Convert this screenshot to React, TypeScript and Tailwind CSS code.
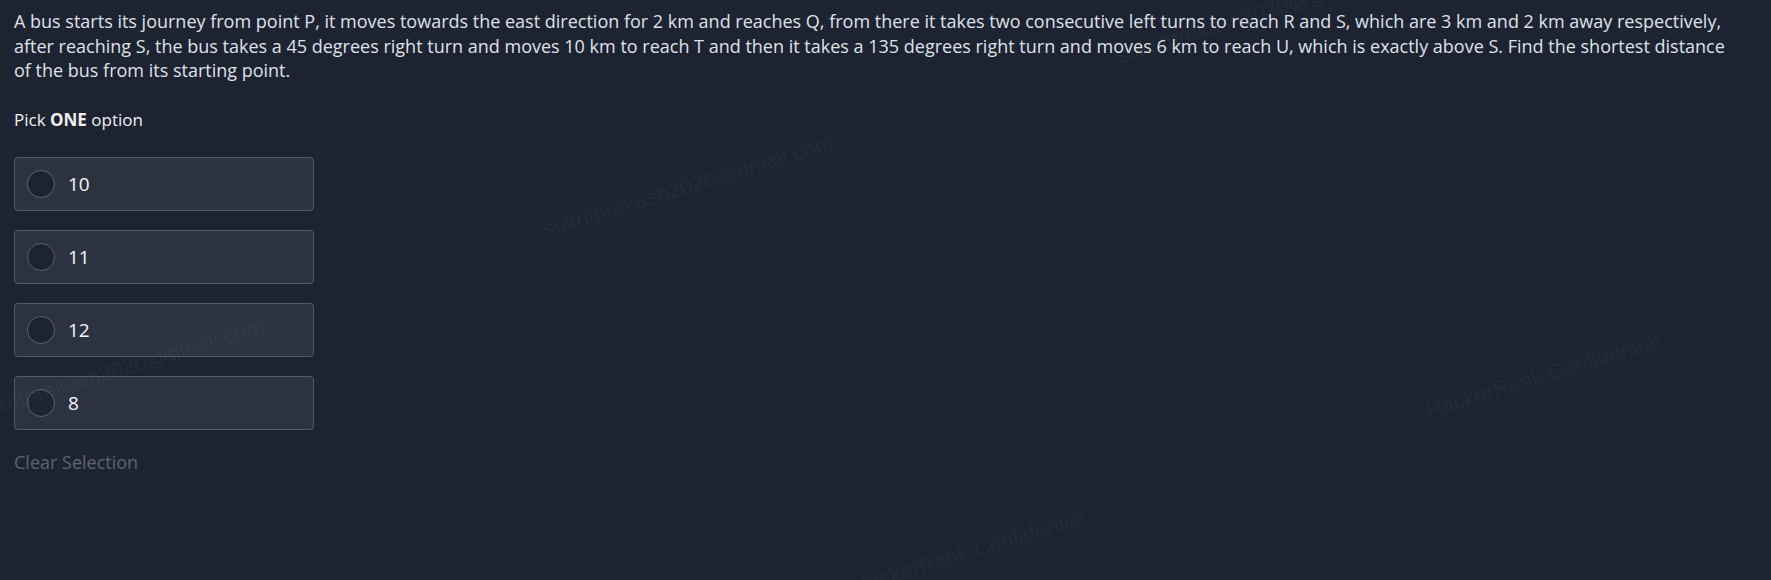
import React from "react";

const options = ["10", "11", "12", "8"];

const marks: { text: string; cls: string }[] = [
  { text: "sukritprakash2020@gmail.com", cls: "left-[547px] top-[218px]" },
  { text: "sukritprakash2020@gmail.com", cls: "left-[-22px] top-[401px]" },
  { text: "sukritprakash2020@gmail.com", cls: "left-[1120px] top-[44px]" },
  { text: "HackerRank Confidential", cls: "left-[1430px] top-[399px]" },
  { text: "HackerRank Confidential", cls: "left-[856px] top-[575px]" },
];

export default function App() {
  return (
    <div
      className="relative w-full h-[580px] overflow-hidden bg-[#1e2331]"
      style={{ fontFamily: '"Open Sans", "Noto Sans", sans-serif' }}
    >
      <div className="relative pl-[14px] pt-[9px]">
        <p className="w-[1718px] text-[18px] leading-[24.7px] text-[#dde2ea]">
          A bus starts its journey from point P, it moves towards the east direction for 2 km and reaches Q, from there it takes two consecutive left turns to reach R and S, which are 3 km and 2 km away respectively, after reaching S, the bus takes a 45 degrees right turn and moves 10 km to reach T and then it takes a 135 degrees right turn and moves 6 km to reach U, which is exactly above S. Find the shortest distance of the bus from its starting point.
        </p>
        <div className="mt-[25px] text-[17px] leading-[24px] text-[#eef0f4]">
          Pick <span className="font-bold">ONE</span> option
        </div>
        <div className="mt-[25px] flex flex-col gap-[19px]">
          {options.map((o) => (
            <div
              key={o}
              className="flex h-[54px] w-[300px] items-center rounded-[4px] border border-[#545a6a] bg-[#2d3241] pl-[12px]"
            >
              <div className="h-[28px] w-[28px] rounded-full border border-[#5b6174] bg-[#1e2331]" />
              <span className="ml-[13px] text-[19px] text-[#f4f6fa]">{o}</span>
            </div>
          ))}
        </div>
        <div className="mt-[20px] text-[18px] leading-[24px] text-[#5d6474]">
          Clear Selection
        </div>
      </div>
      {marks.map((m, i) => (
        <span
          key={i}
          className={`pointer-events-none absolute ${m.cls} origin-bottom-left -rotate-[17deg] whitespace-nowrap text-[22px] leading-[24px] text-[rgba(255,255,255,0.05)]`}
          style={{ fontFamily: '"Liberation Sans", Arial, sans-serif' }}
        >
          {m.text}
        </span>
      ))}
    </div>
  );
}
